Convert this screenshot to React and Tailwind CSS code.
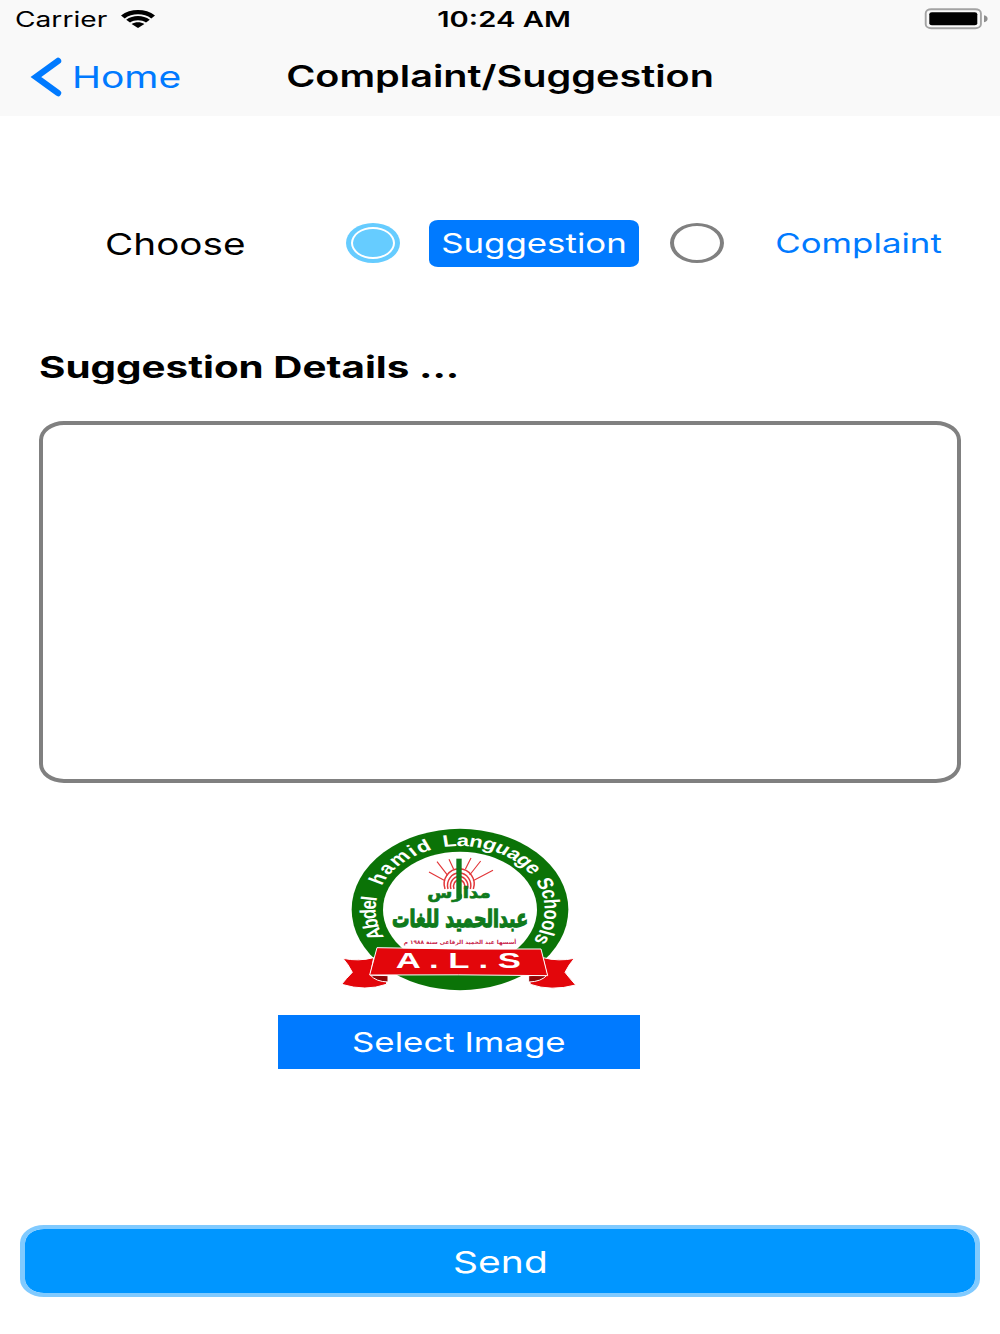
import { useState } from "react";

/* STATUS BAR ICONS */
function WifiIcon() {
  return (
    <svg viewBox="0 0 34 18" className="w-[34px] h-[18px]" preserveAspectRatio="none">
      <path d="M0 5.4 C9.3 -1.8 24.7 -1.8 34 5.4 L30.3 8.4 C23 3 11 3 3.7 8.4 Z" />
      <path d="M5.2 9.7 C12 4.8 22 4.8 28.8 9.7 L25 12.6 C20.6 9.5 13.4 9.5 9 12.6 Z" />
      <path d="M10.6 14 C14.4 11.6 19.6 11.6 23.4 14 L17 18 Z" />
    </svg>
  );
}

function BatteryIcon() {
  return (
    <svg viewBox="0 0 64 22" className="w-16 h-[22px]">
      <rect x="1.7" y="1.2" width="55.2" height="19" rx="5.5" ry="4" fill="none" stroke="#a3a3a3" strokeWidth="1.9" />
      <rect x="5.3" y="4.2" width="48" height="13" rx="2.5" ry="2" />
      <path d="M60 7.3 C64.8 8.2 64.8 13.4 60 14.3 Z" fill="#8e8e8e" />
    </svg>
  );
}

/* each word sits at its own distance along the ring */
const ringWords = [
  { word: "Abdel", offset: 0, length: 124 },
  { word: "hamid", offset: 160, length: 162 },
  { word: "Language", offset: 348, length: 228 },
  { word: "Schools", offset: 594, length: 190 },
];

/* SCHOOL LOGO */
function SchoolLogo() {
  return (
    <svg viewBox="-3 0 780 570" className="w-[260px] h-[190px]">
      <ellipse cx="390" cy="283.5" rx="325" ry="242" fill="#0b7307" />
      <ellipse cx="390" cy="284" rx="231" ry="174" fill="#fff" />

      {/* ring text */}
      <g transform="translate(390 283.5) scale(1.333 1)">
        <path id="ring" d="M-170 84 A190 190 0 1 1 164 96" fill="none" />
        {ringWords.map((w) => (
          <text key={w.word} fill="#fff" fontFamily="Liberation Sans" fontWeight="700" fontSize="50">
            <textPath href="#ring" startOffset={w.offset} textLength={w.length} lengthAdjust="spacing">
              {w.word}
            </textPath>
          </text>
        ))}
      </g>

      {/* sun */}
      <g fill="none" stroke="#e2373a" strokeWidth="4.5">
        <path d="M345 222 A45 46 0 1 1 430 222" />
        <path d="M354 222 A35 37 0 1 1 421 222" />
        <path d="M363 222 A26 28 0 1 1 412 222" />
        <path d="M372 222 A17 19 0 1 1 403 222" />
        <path d="M297 171 L345 197 M321 140 L353 181 M357 133 L371 163 M423 129 L406 163 M452 138 L419 180 M489 166 L429 197" strokeWidth="3.5" />
      </g>
      <rect x="379" y="131" width="16" height="120" fill="#0f7a1c" />

      {/* arabic name */}
      <g fontFamily="DejaVu Sans" fontWeight="700" stroke="#0f7a1c" fill="#0f7a1c" direction="rtl">
        <text x="387" y="248" fontSize="46" textAnchor="middle" strokeWidth="2" textLength="190" lengthAdjust="spacingAndGlyphs">مدارس</text>
        <g transform="translate(390 336) scale(1 1.4)">
          <text x="0" y="0" fontSize="52" textAnchor="middle" strokeWidth="3" textLength="408" lengthAdjust="spacingAndGlyphs">عبدالحميد للغات</text>
        </g>
      </g>
      <text x="390" y="386" fontFamily="DejaVu Sans" fontWeight="700" fontSize="17" fill="#c81e4a" textAnchor="middle" direction="rtl" textLength="338" lengthAdjust="spacingAndGlyphs">
        أسسها عبد الحميد الرقاعى سنة ١٩٨٨ م
      </text>

      {/* ribbon */}
      <g transform="translate(-3 0)">
        <g stroke="#fff" strokeWidth="3" strokeLinejoin="round">
          <path d="M42 430 Q88 440 134 428 L124 480 L176 488 L172 508 Q110 530 38 508 Q52 490 70 472 Q58 448 42 430 Z" fill="#e3060b" />
          <path d="M736 430 Q690 440 642 428 L654 480 L600 488 L604 508 Q666 530 740 510 Q722 490 708 472 Q720 448 736 430 Z" fill="#e3060b" />
          <path d="M124 480 L177 482 L177 501 Q140 500 124 480 Z" fill="#8f0508" />
          <path d="M654 480 L599 482 L599 501 Q638 500 654 480 Z" fill="#8f0508" />
          <path d="M144 398 Q390 404 636 402 L656 482 Q390 478 122 480 Z" fill="#e3060b" />
        </g>
        <text x="388" y="460" fontFamily="Liberation Sans" fontWeight="700" fontSize="68" fill="#fff" textAnchor="middle" textLength="376" lengthAdjust="spacingAndGlyphs">
          A . L . S
        </text>
      </g>
    </svg>
  );
}

function Radio({ checked, onClick }) {
  if (checked) {
    return (
      <button onClick={onClick} className="w-[54px] h-10 mb-px shrink-0 rounded-[50%] bg-[#66ccff] flex items-center justify-center">
        <span className="w-11 h-8 rounded-[50%] border-2 border-white"></span>
      </button>
    );
  }
  return (
    <button onClick={onClick} className="w-[54px] h-10 mb-px shrink-0 rounded-[50%] border-x-4 border-y-[3px] border-[#808080]"></button>
  );
}

function Option({ label, active, onClick }) {
  return (
    <button
      onClick={onClick}
      className={`w-[210px] h-[47px] shrink-0 rounded-[9px/7px] text-[27px] leading-none ${
        active ? "bg-[#007aff] text-white" : "text-[#007aff]"
      }`}
    >
      <span className="inline-block whitespace-nowrap scale-x-129">{label}</span>
    </button>
  );
}

export default function App() {
  const [type, setType] = useState("Suggestion");
  const [details, setDetails] = useState("");

  return (
    <div className="w-[1000px] h-[1334px] bg-white text-black font-[Inter,sans-serif] overflow-hidden">

      {/* HEADER */}
      <header className="h-[116px] bg-[#f9f9f9]">
        <div className="h-[37px] grid grid-cols-3 items-center pl-[15px] pr-3 text-[21px] leading-none">
          <div className="flex items-center">
            <span className="w-[106px] pt-0.5">
              <span className="inline-block origin-left scale-x-[1.34]">Carrier</span>
            </span>
            <WifiIcon />
          </div>
          <span className="text-center font-semibold pt-0.5 pl-1.5">
            <span className="inline-block whitespace-nowrap scale-x-139">10:24 AM</span>
          </span>
          <div className="flex justify-end">
            <BatteryIcon />
          </div>
        </div>

        <nav className="h-[79px] grid grid-cols-[250px_1fr_250px] items-center text-[30px] leading-none">
          <button className="flex items-center pl-[30px] text-[#007aff]">
            <svg viewBox="0 0 32 40" className="w-8 h-10 mr-2.5" fill="none" stroke="currentColor" strokeWidth="6.4" strokeLinecap="round" strokeLinejoin="miter">
              <path d="M28 4 L6 20 L28 36" />
            </svg>
            <span className="inline-block origin-left scale-x-130">Home</span>
          </button>
          <h1 className="text-center font-semibold pl-px pb-px">
            <span className="inline-block whitespace-nowrap scale-x-132">Complaint/Suggestion</span>
          </h1>
        </nav>
      </header>

      {/* TYPE */}
      <div className="flex items-center mt-[104px] pl-[105px]">
        <div className="w-[241px] shrink-0 text-[30px] leading-none">
          <span className="inline-block origin-left scale-x-129">Choose</span>
        </div>
        <Radio checked={type === "Suggestion"} onClick={() => setType("Suggestion")} />
        <div className="ml-[29px] mr-[31px]">
          <Option label="Suggestion" active={type === "Suggestion"} onClick={() => setType("Suggestion")} />
        </div>
        <Radio checked={type === "Complaint"} onClick={() => setType("Complaint")} />
        <div className="ml-[30px]">
          <Option label="Complaint" active={type === "Complaint"} onClick={() => setType("Complaint")} />
        </div>
      </div>

      {/* DETAILS */}
      <div className="mt-[85px] px-[39px]">
        <h2 className="text-[30px] leading-[30px] font-bold">
          <span className="inline-block whitespace-nowrap origin-left scale-x-[1.345]">{type} Details ...</span>
        </h2>
        <textarea
          value={details}
          onChange={(e) => setDetails(e.target.value)}
          className="block w-full h-[362px] mt-[39px] px-4 py-3 resize-none outline-none border-4 border-[#808080] rounded-[25px/19px] text-[27px]"
        />
      </div>

      {/* IMAGE */}
      <div className="w-[362px] ml-[278px] mt-8 flex flex-col items-center">
        <SchoolLogo />
        <button className="w-full h-[54px] mt-2.5 bg-[#007aff] text-white text-[27px] leading-none">
          <span className="inline-block whitespace-nowrap scale-x-129">Select Image</span>
        </button>
      </div>

      {/* SEND */}
      <div className="mt-[156px] px-5">
        <button className="w-full h-[72px] pt-0.5 bg-[#0096ff] bg-clip-padding text-white text-[30px] leading-none border-x-[5px] border-y-4 border-[#80caff] rounded-[24px/18px]">
          <span className="inline-block scale-x-130">Send</span>
        </button>
      </div>
    </div>
  );
}
